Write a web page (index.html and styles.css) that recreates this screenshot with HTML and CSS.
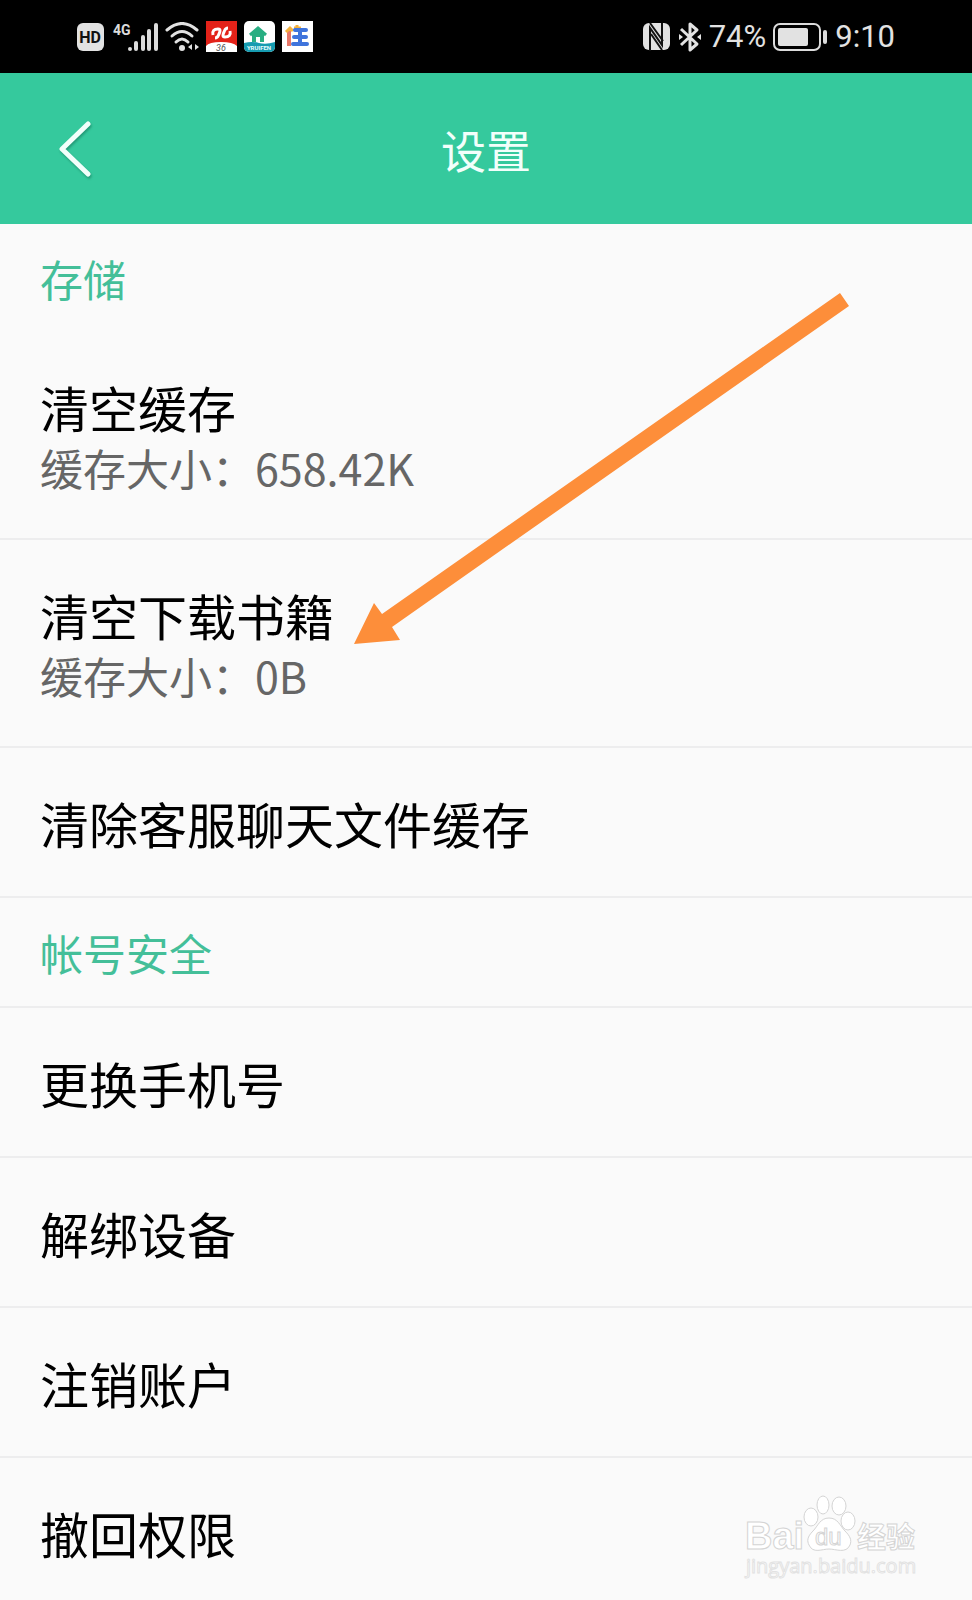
FILE: index.html
```
<!DOCTYPE html>
<html lang="zh-CN">
<head>
<meta charset="utf-8">
<meta name="viewport" content="width=device-width, initial-scale=1">
<title>设置</title>
<link rel="stylesheet" href="styles.css">
</head>
<body>
<div class="screen">
  <div class="status">
    <div class="status-group">
      <svg class="icon" width="28" height="30" viewBox="0 0 28 30">
        <rect x="0" y="1" width="27" height="28" rx="6" fill="#e2e2e2"/>
        <text x="13" y="21" text-anchor="middle" class="hd">HD</text>
      </svg>
      <svg class="icon" width="46" height="30" viewBox="0 0 46 30">
        <text x="1" y="13" class="net">4G</text>
        <g fill="#dcdcdc">
          <circle cx="18" cy="27" r="2"/>
          <rect x="22" y="19" width="4" height="10" rx="2"/>
          <rect x="29" y="13" width="4" height="16" rx="2"/>
          <rect x="35" y="7" width="4" height="22" rx="2"/>
          <rect x="42" y="1" width="4" height="28" rx="2"/>
        </g>
      </svg>
      <svg class="icon" width="34" height="30" viewBox="0 0 34 30">
        <g fill="none" stroke="#e2e2e2" stroke-width="3" stroke-linecap="round">
          <path d="M2 8Q17 -5 32 8"/>
          <path d="M7 14Q17 5 27 14"/>
          <path d="M11 20Q17 14 23 20"/>
        </g>
        <circle cx="17" cy="26" r="3" fill="#e2e2e2"/>
        <path d="M23 25l4-3v6zM34 25l-4-3v6z" fill="#e2e2e2"/>
      </svg>
      <svg class="icon" width="31" height="31" viewBox="0 0 31 31">
        <path fill="#e32219" d="M0 0h31v31H0z"/>
        <path d="M0 25Q3 21 15 21T31 25V31H0z" fill="#fff"/>
        <path d="M7 14c-1-4 1-6 5-6 3 0 2 3 1 5s-1 4-4 4M24 10c1 4-1 6-5 6-3 0-2-3-1-5s1-4 4-4" fill="none" stroke="#fff" stroke-width="3"/>
        <text x="15" y="30" text-anchor="middle" class="badge">36</text>
      </svg>
      <svg class="icon" width="31" height="31" viewBox="0 0 31 31">
        <rect width="31" height="31" rx="5" fill="#fff"/>
        <path d="M0 22q8-2 15 0t16-1v5a5 5 0 0 1-5 5H5a5 5 0 0 1-5-5z" fill="#169bb0"/>
        <path d="M6 14l8-7 8 7" fill="none" stroke="#28ae82" stroke-width="3"/>
        <path d="M8 13l6-5 6 5v8h-4v-5h-4v5H8z" fill="#28ae82"/>
        <text x="15" y="29" text-anchor="middle" class="brand">YRUIFEN</text>
      </svg>
      <svg class="icon" width="31" height="31" viewBox="0 0 31 31">
        <path fill="#fff" d="M0 0h31v31H0z"/>
        <path d="M7 9v16" stroke="#e87768" stroke-width="4"/>
        <path d="M4 11l4-4 3 3M12 7h7M15 4v4" fill="none" stroke="#f4b13c" stroke-width="3"/>
        <path d="M13 9h11M12 16h12M11 23h14" stroke="#3f74dc" stroke-width="4" stroke-linecap="round"/>
        <path d="M18 8v15" stroke="#3f74dc" stroke-width="4"/>
      </svg>
    </div>
    <div class="status-group">
      <svg class="icon" width="28" height="30" viewBox="0 0 28 30">
        <rect x="0" y="1" width="27" height="27" rx="6" fill="#e2e2e2"/>
        <path d="M7 29V6L19 23V1M7 1L20 19M8 12L19 28" fill="none" stroke="#111" stroke-width="2"/>
      </svg>
      <svg class="icon" width="24" height="32" viewBox="0 0 24 32">
        <path d="M3 8l16 15-7 6V3l7 6L3 24" fill="none" stroke="#e2e2e2" stroke-width="3" stroke-linejoin="round"/>
        <path d="M1 13l4 3-4 3zM23 13l-4 3 4 3z" fill="#e2e2e2"/>
      </svg>
      <span>74%</span>
      <svg class="icon" width="55" height="30" viewBox="0 0 55 30">
        <rect x="1" y="2" width="46" height="26" rx="6" fill="none" stroke="#dcdcdc" stroke-width="2"/>
        <rect x="5" y="6" width="30" height="18" rx="2" fill="#e2e2e2"/>
        <rect x="50" y="8" width="4" height="14" rx="2" fill="#dcdcdc"/>
      </svg>
      <time>9:10</time>
    </div>
  </div>

  <header class="topbar">
    <button class="back" type="button" aria-label="返回">
      <svg width="36" height="60" viewBox="0 0 36 60">
        <path d="M30 5L4 30L30 55" fill="none" stroke="#f2fffb" stroke-width="5" stroke-linecap="round" stroke-linejoin="round"/>
      </svg>
    </button>
    <h1 class="title">设置</h1>
  </header>

  <main class="list">
    <h2 class="section">存储</h2>
    <button class="item" type="button"><span class="name">清空缓存</span><span class="note">缓存大小：658.42K</span></button>
    <button class="item" type="button"><span class="name">清空下载书籍</span><span class="note">缓存大小：0B</span></button>
    <button class="item" type="button"><span class="name">清除客服聊天文件缓存</span></button>
    <h2 class="section ruled">帐号安全</h2>
    <button class="item" type="button"><span class="name">更换手机号</span></button>
    <button class="item" type="button"><span class="name">解绑设备</span></button>
    <button class="item" type="button"><span class="name">注销账户</span></button>
    <button class="item" type="button"><span class="name">撤回权限</span></button>

    <svg class="arrow" width="495" height="352" viewBox="0 0 495 352">
      <path d="M0 351L20 310L28 321L486 0L495 13L38 334L46 347z" fill="#fd8e3a"/>
    </svg>
    <svg class="watermark" width="180" height="90" viewBox="0 0 180 90">
      <g fill="#fff" stroke="#d4d4d4" stroke-width="1">
        <text x="3" y="54" class="wm-logo">Bai</text>
        <ellipse cx="69" cy="22" rx="7" ry="9"/>
        <ellipse cx="81" cy="10" rx="6" ry="9"/>
        <ellipse cx="97" cy="11" rx="7" ry="9"/>
        <ellipse cx="106" cy="26" rx="7" ry="9"/>
        <path d="M87 23c-9 0-11 8-16 13-6 6-6 10-4 14 4 9 13 4 20 4s17 5 21-4c2-5 0-9-5-14-5-5-7-13-16-13z"/>
        <text x="73" y="50" class="wm-du">du</text>
        <text x="115" y="53" class="wm-cn">经验</text>
        <text x="4" y="78" class="wm-url">jingyan.baidu.com</text>
      </g>
    </svg>
  </main>
</div>
</body>
</html>
```
FILE: styles.css
```
* { box-sizing: border-box; }

body {
  margin: 0;
  background: #fafafa;
  font-family: "Noto Sans CJK SC", sans-serif;
}

.icon { display: block; flex: none; }

.status {
  display: flex;
  justify-content: space-between;
  align-items: center;
  height: 73px;
  padding: 0 77px;
  background: #000;
  color: #e2e2e2;
  font: 31px/40px Roboto, sans-serif;
}

.status-group {
  display: flex;
  align-items: center;
  gap: 7px;
}

.hd { font: 700 16px Roboto, sans-serif; fill: #111; }
.net { font: 700 14px Roboto, sans-serif; fill: #dcdcdc; }
.badge { font: italic 9px Roboto, sans-serif; fill: #555; }
.brand { font: 700 6px Roboto, sans-serif; fill: #e8ffff; }

.topbar {
  display: grid;
  grid-template-columns: 1fr auto 1fr;
  align-items: center;
  height: 151px;
  padding: 0 58px;
  background: #35c99d;
  color: #f2fffb;
}

.back {
  justify-self: start;
  padding: 0;
  border: 0;
  background: none;
  filter: drop-shadow(1px 2px 1px rgba(0, 70, 50, 0.35));
}

.back svg { display: block; }

.title {
  margin: 0;
  padding-top: 2px;
  font-size: 45px;
  line-height: 60px;
  font-weight: 400;
}

.list { position: relative; }

.section {
  margin: 0;
  padding: 24px 40px;
  color: #44bf99;
  font-size: 43px;
  line-height: 60px;
  font-weight: 400;
}

.ruled { border-bottom: 2px solid #ededee; }

.item {
  display: block;
  width: 100%;
  padding: 45px 40px 43px;
  border: 0;
  border-bottom: 2px solid #ededee;
  background: none;
  color: #000;
  font-family: inherit;
  text-align: left;
}

.item:has(.note) { padding-bottom: 41px; }

.item:last-of-type {
  padding-bottom: 37px;
  border-bottom: 0;
}

.name,
.note {
  display: block;
  font-size: 49px;
  line-height: 60px;
}

.note {
  color: #666;
  font-size: 43px;
}

.arrow {
  position: absolute;
  left: 354px;
  top: 69px;
  pointer-events: none;
}

.watermark {
  position: absolute;
  right: 50px;
  bottom: 15px;
  pointer-events: none;
}

.wm-logo { font: 700 38px "Liberation Sans", sans-serif; }
.wm-du { font: 24px "Liberation Sans", sans-serif; }
.wm-cn { font: 700 29px "Noto Sans CJK SC", sans-serif; }
.wm-url { font: 20px "Open Sans", sans-serif; stroke: #e2e2e2; }
```
